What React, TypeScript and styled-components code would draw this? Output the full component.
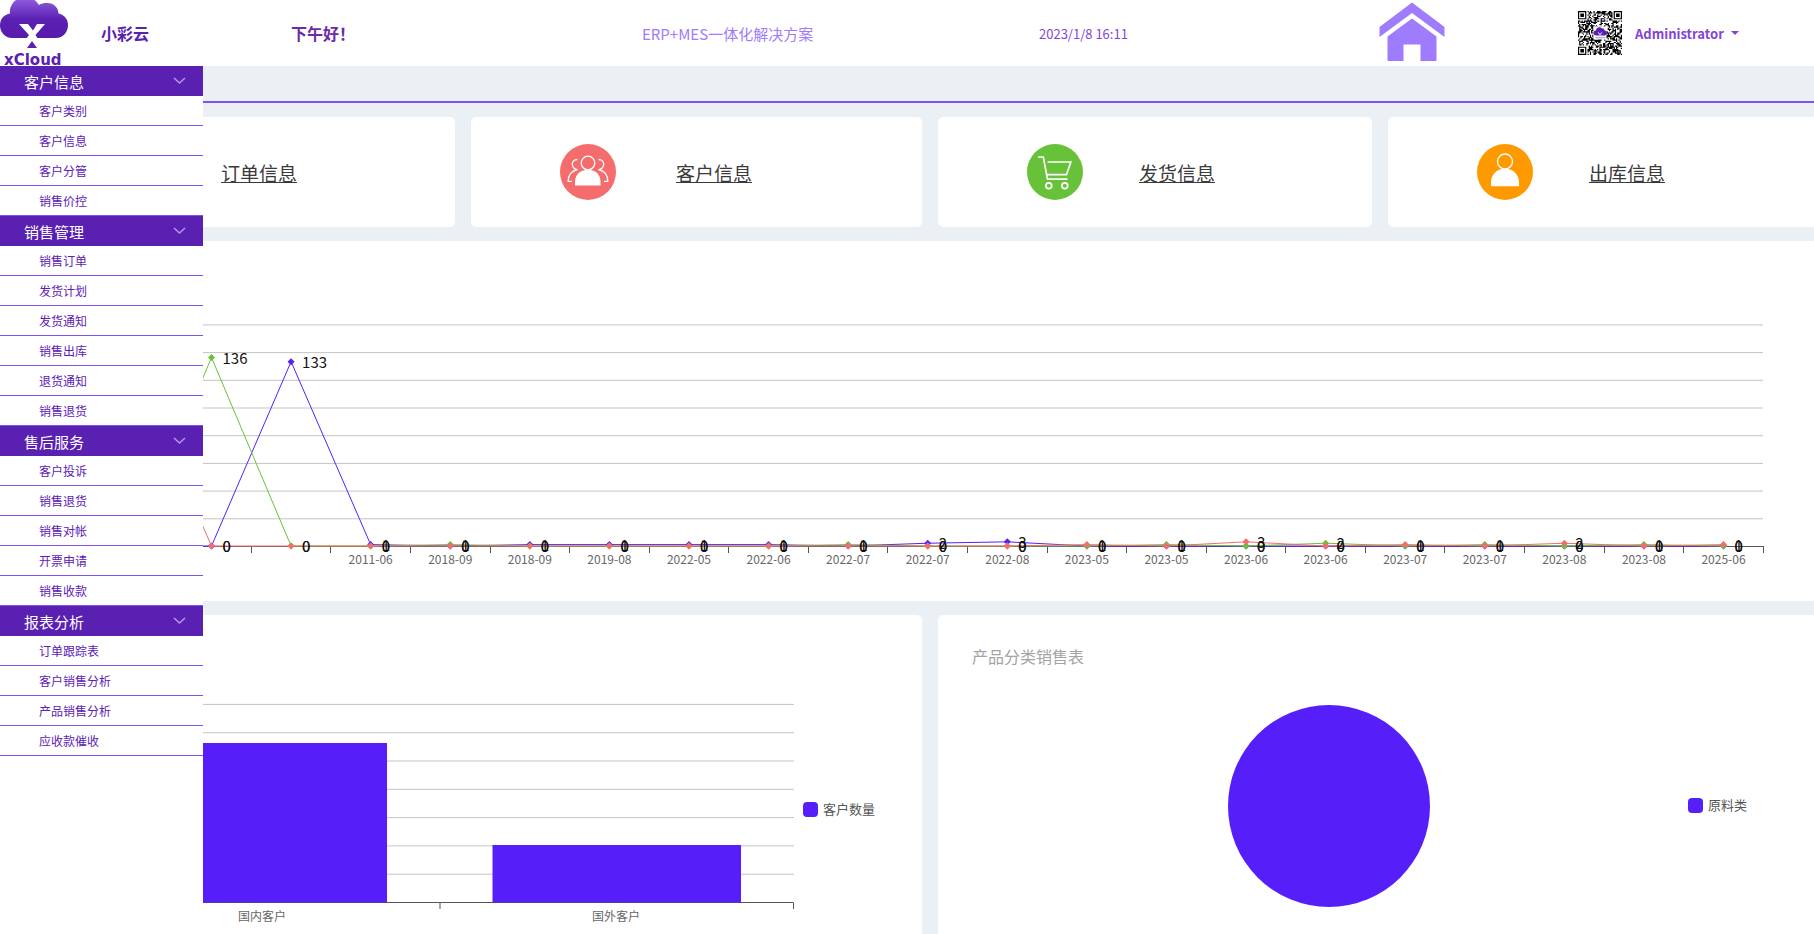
import React from "react";
import styled, { createGlobalStyle } from "styled-components";

const color = {
  brand: "#5a20b2",
  brandText: "#5b21b6",
  line: "#7c52fb",
  soft: "#9f7bfd",
  chart: "#561ffa",
  green: "#67c23a",
  red: "#f56c6c",
  orange: "#ff9900",
  page: "#ebf0f5",
};

const GlobalStyle = createGlobalStyle`
  *, *::before, *::after { box-sizing: border-box; }
  body {
    margin: 0;
    background: ${color.page};
    font-family: "Noto Sans CJK SC", "Noto Sans", sans-serif;
  }
`;

const Page = styled.div`
  display: flex;
  flex-direction: column;
  min-height: 100vh;
`;

/* ---------- header ---------- */

const Header = styled.header`
  display: grid;
  grid-template-columns: 101fr 190fr 351fr 397fr 340fr 199fr 236fr;
  align-items: center;
  height: 66px;
  background: #fff;
  white-space: nowrap;

  > * {
    min-width: 0;
  }
`;

const LogoSvg = styled.svg`
  display: block;
  width: 70px;
  height: 66px;
  overflow: visible;
`;

const BrandName = styled.strong`
  font-size: 16px;
  font-weight: 700;
  color: ${color.brand};
`;

const Greeting = styled.span`
  font-size: 16px;
  font-weight: 700;
  color: #6b2aa8;
`;

const Slogan = styled.span`
  font-size: 15px;
  color: ${color.soft};
`;

const Clock = styled.time`
  font-size: 13px;
  color: #8445d6;
`;

const HomeLink = styled.a`
  display: block;
  width: 66px;
  height: 62px;

  svg {
    display: block;
  }
`;

const Account = styled.div`
  display: flex;
  align-items: center;
  gap: 13px;
`;

const UserButton = styled.button`
  display: flex;
  align-items: center;
  gap: 7px;
  padding: 0;
  border: 0;
  background: none;
  font: inherit;
  font-size: 13px;
  font-weight: 700;
  color: #8445d6;
  cursor: pointer;
`;

const Caret = styled.span`
  border: 4px solid transparent;
  border-top-color: currentColor;
  border-bottom: 0;
`;

/* ---------- side menu ---------- */

const Body = styled.div`
  display: flex;
  flex: 1;
`;

const SideNav = styled.nav`
  flex: 0 0 203px;
  background: #fff;
`;

const GroupButton = styled.button`
  display: flex;
  align-items: center;
  justify-content: space-between;
  width: 100%;
  height: 30px;
  padding: 0 17px 0 24px;
  border: 0;
  background: ${color.brand};
  font: inherit;
  font-size: 15px;
  line-height: 28px;
  color: #fff;
  cursor: pointer;

  span {
    padding-top: 2px;
  }
`;

const ItemList = styled.ul`
  margin: 0;
  padding: 0;
  list-style: none;
`;

const ItemLink = styled.a`
  display: block;
  height: 30px;
  padding-left: 39px;
  border-bottom: 1px solid ${color.line};
  font-size: 12px;
  line-height: 29px;
  color: ${color.brandText};
  text-decoration: none;
`;

/* ---------- content ---------- */

const Main = styled.main`
  display: flex;
  flex: 1;
  flex-direction: column;
  gap: 14px;
  min-width: 0;
  overflow: hidden;
`;

const TabBar = styled.div`
  height: 37px;
  border-bottom: 2px solid ${color.line};
`;

const ShortcutRow = styled.section`
  display: grid;
  grid-template-columns: 252fr 451fr 434fr 426fr;
  column-gap: 16px;
`;

const PanelRow = styled.section`
  display: grid;
  flex: 1;
  grid-template-columns: 719fr 876fr;
  column-gap: 16px;
`;

const Card = styled.div<{ $edge?: "left" | "right" }>`
  min-width: 0;
  background: #fff;
  border-radius: ${(p) =>
    p.$edge === "left" ? "0 5px 5px 0" : p.$edge === "right" ? "5px 0 0 5px" : "5px"};
`;

const Panel = styled(Card)`
  border-bottom-left-radius: 0;
  border-bottom-right-radius: 0;
`;

const Shortcut = styled(Card)<{ $gap: number }>`
  display: flex;
  align-items: center;
  gap: ${(p) => p.$gap}px;
  height: 110px;
  padding-left: ${(p) => (p.$edge === "left" ? 18 : 89)}px;
`;

const ShortcutLink = styled.a`
  padding-top: 2px;
  font-size: 19px;
  line-height: 28px;
  color: #3a3a3a;
  text-decoration: underline;
  white-space: nowrap;
`;

const ChartPanel = styled.section`
  background: #fff;
`;

const PanelTitle = styled.h2`
  margin: 0;
  padding: 29px 34px 0;
  font-size: 16px;
  font-weight: 400;
  line-height: 24px;
  color: #a3a3a3;
`;

const ChartSvg = styled.svg`
  display: block;
  width: 100%;
  height: auto;
  font-family: "Noto Sans CJK SC", "Noto Sans", sans-serif;
`;

const AxisLabel = styled.text`
  font-size: 12px;
  fill: #666;
  text-anchor: middle;
`;

const LegendLabel = styled.text`
  font-size: 13px;
  fill: #555;
`;

const ValueLabel = styled.text`
  font-size: 15px;
  fill: #111;
`;

/* ---------- data ---------- */

const menu = [
  { title: "客户信息", items: ["客户类别", "客户信息", "客户分管", "销售价控"] },
  {
    title: "销售管理",
    items: ["销售订单", "发货计划", "发货通知", "销售出库", "退货通知", "销售退货"],
  },
  {
    title: "售后服务",
    items: ["客户投诉", "销售退货", "销售对帐", "开票申请", "销售收款"],
  },
  {
    title: "报表分析",
    items: ["订单跟踪表", "客户销售分析", "产品销售分析", "应收款催收"],
  },
];

const months = [
  "", "", "", "2011-06", "2018-09", "2018-09", "2019-08", "2022-05", "2022-06",
  "2022-07", "2022-07", "2022-08", "2023-05", "2023-05", "2023-06", "2023-06",
  "2023-07", "2023-07", "2023-08", "2023-08", "2025-06",
];

const series = [
  { fill: color.chart, data: [0, 0, 133, 1, 0, 1, 1, 1, 1, 0, 2, 3, 0, 0, 0, 0, 0, 0, 0, 0, 0] },
  { fill: color.green, data: [0, 136, 0, 0, 1, 0, 0, 0, 0, 1, 0, 0, 0, 1, 0, 2, 0, 1, 0, 1, 0] },
  { fill: color.red, data: [131, 0, 0, 0, 0, 0, 0, 0, 0, 0, 0, 0, 1, 0, 3, 0, 1, 0, 2, 0, 1] },
];

/* ---------- drawings ---------- */

function Logo() {
  return (
    <LogoSvg viewBox="0 0 70 66" role="img" aria-label="xCloud">
      <defs>
        <linearGradient id="cloud" x1="0" y1="0" x2="0" y2="1">
          <stop offset="0" stopColor="#9561e2" />
          <stop offset="0.55" stopColor="#5a20b2" />
          <stop offset="1" stopColor="#571cae" />
        </linearGradient>
        <clipPath id="cloudTop">
          <rect width="70" height="66" />
        </clipPath>
      </defs>
      <path
        d="M12 38C5 38 0 32 0 25.500C0 19 4 14.500 10 13.500C9 5 16-3 25-3C31-3 36 0 39 5C41 3.500 44 3 47 3C54 3 58.500 8 58.500 13.500C64 14.500 68 19 68 25C68 32 63 38 56 38Z"
        fill="url(#cloud)"
        clipPath="url(#cloudTop)"
      />
      <path d="M19 24H28L33 30.500L37 24H45L35.500 35L38 39H26L29 35Z" fill="#fff" />
      <path d="M32 41L37 48H27Z" fill={color.brand} />
      <text
        x="4"
        y="65"
        fontFamily="DejaVu Sans, sans-serif"
        fontSize="15"
        fontWeight="700"
        fill={color.brand}
      >
        xCloud
      </text>
    </LogoSvg>
  );
}

function HomeIcon() {
  return (
    <svg width="66" height="60" viewBox="0 0 66 60" fill={color.soft} aria-hidden="true">
      <path d="M33 0.500L65.500 25V35L33 11L0.500 35V25Z" />
      <path d="M33 16.500L57.500 34.500V59H41.500V42.500H24.500V59H8.500V34.500Z" />
    </svg>
  );
}

const QR_SIZE = 37;

function inFinder(x: number, y: number): boolean | null {
  const corners = [[0, 0], [QR_SIZE - 7, 0], [0, QR_SIZE - 7]];
  for (const [cx, cy] of corners) {
    const dx = x - cx;
    const dy = y - cy;
    if (dx >= -1 && dx <= 7 && dy >= -1 && dy <= 7) {
      const ring = Math.max(Math.abs(dx - 3), Math.abs(dy - 3));
      return ring === 3 || ring <= 1;
    }
  }
  return null;
}

function qrPath(): string {
  let seed = 20230108;
  let d = "";
  for (let y = 0; y < QR_SIZE; y++) {
    for (let x = 0; x < QR_SIZE; x++) {
      seed = (seed * 1103515245 + 12345) % 2147483648;
      const finder = inFinder(x, y);
      const dark = finder === null ? (seed >> 12) % 100 < 52 : finder;
      if (dark) d += `M${x} ${y}h1v1h-1z`;
    }
  }
  return d;
}

function QrCode() {
  return (
    <svg width="44" height="44" viewBox="0 0 37 37" role="img" aria-label="QR">
      <path d={qrPath()} fill="#000" />
      <rect x="13" y="13" width="11" height="11" fill="#fff" />
      <path
        d="M15 20.500a2 2 0 0 1 0-4a3 3 0 0 1 5-2a2.500 2.500 0 0 1 2.500 2a2 2 0 0 1 0 4z"
        fill={color.brand}
      />
      <path d="M17 18l1.500 2l1.500-2" stroke="#fff" strokeWidth="0.800" fill="none" />
      <path d="M14.500 22.500h8.500" stroke="#b79bea" strokeWidth="1" />
    </svg>
  );
}

function Chevron() {
  return (
    <svg width="14" height="10" viewBox="0 0 14 10" fill="none" aria-hidden="true">
      <path d="M2 2L7.500 7L13 2" stroke="#b795e6" strokeWidth="1.600" />
    </svg>
  );
}

function CustomersIcon() {
  return (
    <svg width="56" height="56" viewBox="0 0 56 56" fill="none" stroke="#fff" strokeWidth="1.300" aria-hidden="true">
      <circle cx="28" cy="28" r="28" fill={color.red} stroke="none" />
      <circle cx="28" cy="19" r="6.800" />
      <path d="M15 41.500V38C15 31 20 25.800 28 25.800S40.500 31 40.500 38V41.500Z" fill="#fff" stroke="none" />
      <path d="M17.500 15.500C14 15.500 12.300 18 12.300 20.300C12.300 23 14.500 25.500 17.500 25.700C11.500 27 8.200 31 8.200 37.300H12" />
      <path d="M38.500 15.500C42 15.500 43.700 18 43.700 20.300C43.700 23 41.500 25.500 38.500 25.700C44.500 27 47.800 31 47.800 37.300H44" />
    </svg>
  );
}

function CartIcon() {
  return (
    <svg width="56" height="56" viewBox="0 0 56 56" fill="none" stroke="#fff" strokeWidth="1.700" aria-hidden="true">
      <circle cx="28" cy="28" r="28" fill={color.green} stroke="none" />
      <path d="M11 13H16.300L20.500 35.200H40.500" />
      <path d="M20.500 18H43.800L39.500 30.700H19.500" />
      <circle cx="21.800" cy="41.700" r="2.900" />
      <circle cx="37.800" cy="41.700" r="2.900" />
    </svg>
  );
}

function UserIcon() {
  return (
    <svg width="56" height="56" viewBox="0 0 56 56" fill="none" aria-hidden="true">
      <circle cx="28" cy="28" r="28" fill={color.orange} />
      <circle cx="28" cy="17.500" r="7.500" stroke="#fff" strokeWidth="1.300" />
      <path d="M14 42.300V38C14 31 19.500 24.700 28 24.700S42 31 42 38V42.300Z" fill="#fff" />
    </svg>
  );
}

/* ---------- charts ---------- */

const STEP = 79.58;
const pointX = (i: number) => 8.5 + (i - 1) * STEP;
const pointY = (v: number) => 305 - v * 1.386;

function OrderTrendChart() {
  return (
    <ChartSvg viewBox="0 0 1611 360" role="img" aria-label="订单趋势">
      {[1, 2, 3, 4, 5, 6, 7, 8].map((n) => (
        <line key={n} x1="0" x2="1560" y1={305.5 - n * 27.7} y2={305.5 - n * 27.7} stroke="#c4c4c4" />
      ))}
      <line x1="0" x2="1561" y1="305.5" y2="305.5" stroke="#555" />
      {months.map((m, i) => {
        const x = Math.floor(pointX(i) + STEP / 2) + 0.5;
        return (
          <g key={i}>
            <line x1={x} x2={x} y1="306" y2="312" stroke="#555" />
            {m && <AxisLabel x={pointX(i)} y="323">{m}</AxisLabel>}
          </g>
        );
      })}
      {series.map((s) => (
        <g key={s.fill}>
          <polyline
            points={s.data.map((v, i) => `${pointX(i)},${pointY(v)}`).join(" ")}
            fill="none"
            stroke={s.fill}
            strokeWidth="1"
          />
          {s.data.map((v, i) => (
            <path
              key={i}
              d={`M${pointX(i)} ${pointY(v) - 3.5}l3.500 3.500l-3.500 3.500l-3.500-3.500z`}
              fill={s.fill}
            />
          ))}
        </g>
      ))}
      {series.map((s) =>
        s.data.map((v, i) =>
          i === 0 ? null : (
            <ValueLabel key={`${s.fill}${i}`} x={pointX(i) + 11} y={pointY(v) + 6}>
              {v}
            </ValueLabel>
          ),
        ),
      )}
    </ChartSvg>
  );
}

function CustomerBarChart() {
  return (
    <ChartSvg viewBox="0 0 719 318" role="img" aria-label="客户数量">
      {[1, 2, 3, 4, 5, 6, 7].map((n) => (
        <line key={n} x1="0" x2="591" y1={287.5 - n * 28.3} y2={287.5 - n * 28.3} stroke="#c4c4c4" />
      ))}
      <path d="M0 287.500H590.500V294M237 288V294" fill="none" stroke="#555" />
      <rect x="-64" y="128" width="248" height="159.500" fill={color.chart} />
      <rect x="289.500" y="230" width="248.500" height="57.500" fill={color.chart} />
      <AxisLabel x="59" y="306">国内客户</AxisLabel>
      <AxisLabel x="413" y="306">国外客户</AxisLabel>
      <rect x="600" y="187" width="15" height="15" rx="4" fill={color.chart} />
      <LegendLabel x="620" y="199">客户数量</LegendLabel>
    </ChartSvg>
  );
}

function ProductPieChart() {
  return (
    <ChartSvg viewBox="0 0 876 265" role="img" aria-label="产品分类销售表">
      <circle cx="391" cy="138" r="101" fill={color.chart} />
      <rect x="750" y="130" width="15" height="15" rx="4" fill={color.chart} />
      <LegendLabel x="770" y="142">原料类</LegendLabel>
    </ChartSvg>
  );
}

export default function App() {
  return (
    <Page>
      <GlobalStyle />
      <Header>
        <Logo />
        <BrandName>小彩云</BrandName>
        <Greeting>下午好！</Greeting>
        <Slogan>ERP+MES一体化解决方案</Slogan>
        <Clock dateTime="2023-01-08T16:11">2023/1/8 16:11</Clock>
        <HomeLink href="#home" aria-label="首页">
          <HomeIcon />
        </HomeLink>
        <Account>
          <QrCode />
          <UserButton type="button">
            Administrator
            <Caret />
          </UserButton>
        </Account>
      </Header>
      <Body>
        <SideNav>
          {menu.map((group) => (
            <div key={group.title}>
              <GroupButton type="button" aria-expanded="true">
                <span>{group.title}</span>
                <Chevron />
              </GroupButton>
              <ItemList>
                {group.items.map((item) => (
                  <li key={item}>
                    <ItemLink href="#item">{item}</ItemLink>
                  </li>
                ))}
              </ItemList>
            </div>
          ))}
        </SideNav>
        <Main>
          <TabBar />
          <ShortcutRow>
            <Shortcut $edge="left" $gap={0}>
              <ShortcutLink href="#orders">订单信息</ShortcutLink>
            </Shortcut>
            <Shortcut $gap={60}>
              <CustomersIcon />
              <ShortcutLink href="#customers">客户信息</ShortcutLink>
            </Shortcut>
            <Shortcut $gap={56}>
              <CartIcon />
              <ShortcutLink href="#shipping">发货信息</ShortcutLink>
            </Shortcut>
            <Shortcut $edge="right" $gap={56}>
              <UserIcon />
              <ShortcutLink href="#outbound">出库信息</ShortcutLink>
            </Shortcut>
          </ShortcutRow>
          <ChartPanel>
            <OrderTrendChart />
          </ChartPanel>
          <PanelRow>
            <Panel $edge="left">
              <CustomerBarChart />
            </Panel>
            <Panel $edge="right">
              <PanelTitle>产品分类销售表</PanelTitle>
              <ProductPieChart />
            </Panel>
          </PanelRow>
        </Main>
      </Body>
    </Page>
  );
}
